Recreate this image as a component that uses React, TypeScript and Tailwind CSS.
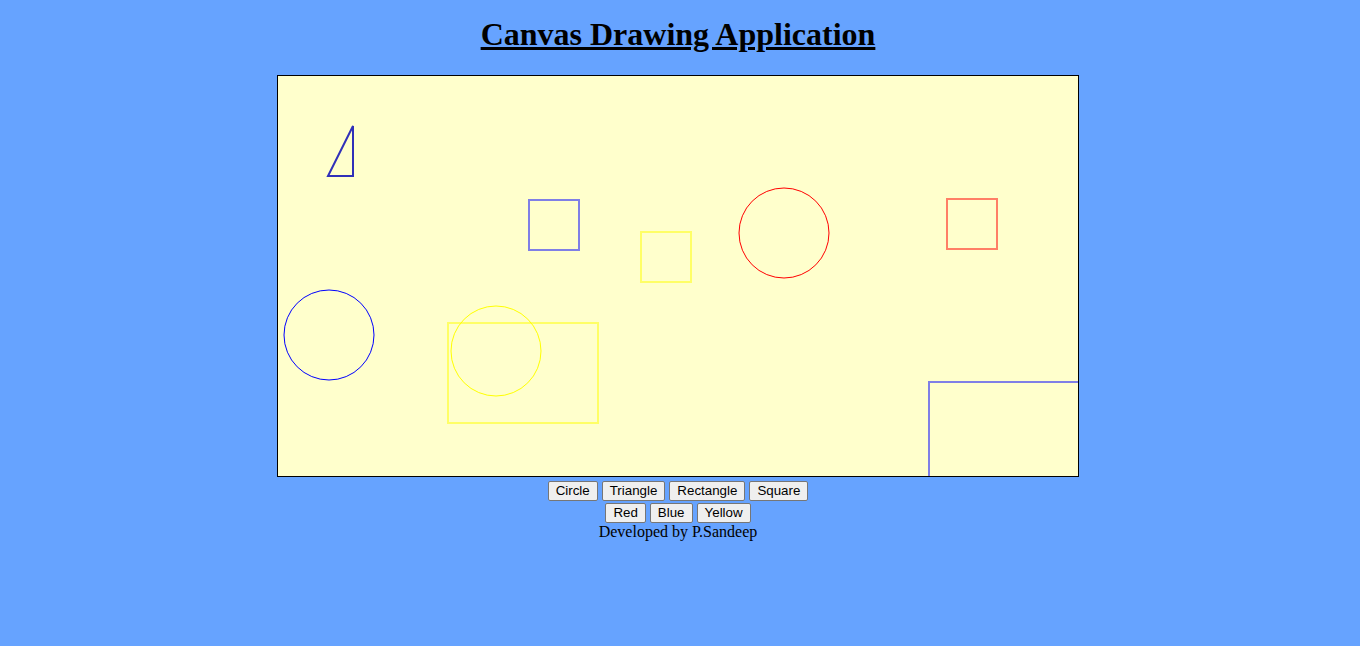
const shapeBtns = ["Circle", "Triangle", "Rectangle", "Square"];
const colorBtns = ["Red", "Blue", "Yellow"];

const Btn = ({ label }: { label: string }) => (
  <button className="px-[7px] py-[1px] border border-[#767676] rounded-[2px] bg-[#efefef] text-[13.333px] leading-[16px] text-black font-['Liberation_Sans',Arial,sans-serif]">
    {label}
  </button>
);

// canvas strokes on whole pixels come out 2px wide at half strength, so draw them that way
const Drawing = () => (
  <svg width={800} height={400} viewBox="0 0 800 400" className="block">
    <polygon points="75,50 50,100 75,100" fill="none" stroke="#3030b8" strokeWidth={2} />
    <rect x={251} y={124} width={50} height={50} fill="none" stroke="#7f7fe6" strokeWidth={2} />
    <rect x={363} y={156} width={50} height={50} fill="none" stroke="#ffff66" strokeWidth={2} />
    <rect x={669} y={123} width={50} height={50} fill="none" stroke="#ff7f66" strokeWidth={2} />
    <rect x={170} y={247} width={150} height={100} fill="none" stroke="#ffff66" strokeWidth={2} />
    <rect x={651} y={306} width={150} height={100} fill="none" stroke="#7f7fe6" strokeWidth={2} />
    <circle cx={506} cy={157} r={45} fill="none" stroke="red" strokeWidth={1} />
    <circle cx={51} cy={259} r={45} fill="none" stroke="blue" strokeWidth={1} />
    <circle cx={218} cy={275} r={45} fill="none" stroke="yellow" strokeWidth={1} />
  </svg>
);

export default function App() {
  return (
    <div className="min-h-[646px] bg-[#66a3ff] pr-1 font-['Liberation_Serif','Times_New_Roman',serif] text-black">
      <h1 className="pt-[16px] text-center text-[32px] font-bold underline leading-[36px]">
        Canvas Drawing Application
      </h1>
      <div className="mt-[23px] mx-auto w-[802px] border border-black bg-[#ffffcc] overflow-hidden">
        <Drawing />
      </div>
      <div className="mt-[4px] flex flex-col items-center">
        <div className="flex gap-[4px]">
          {shapeBtns.map((b) => (
            <Btn key={b} label={b} />
          ))}
        </div>
        <div className="mt-[2px] flex gap-[4px]">
          {colorBtns.map((b) => (
            <Btn key={b} label={b} />
          ))}
        </div>
        <p className="text-[16px] leading-[18px]">Developed by P.Sandeep</p>
      </div>
    </div>
  );
}
